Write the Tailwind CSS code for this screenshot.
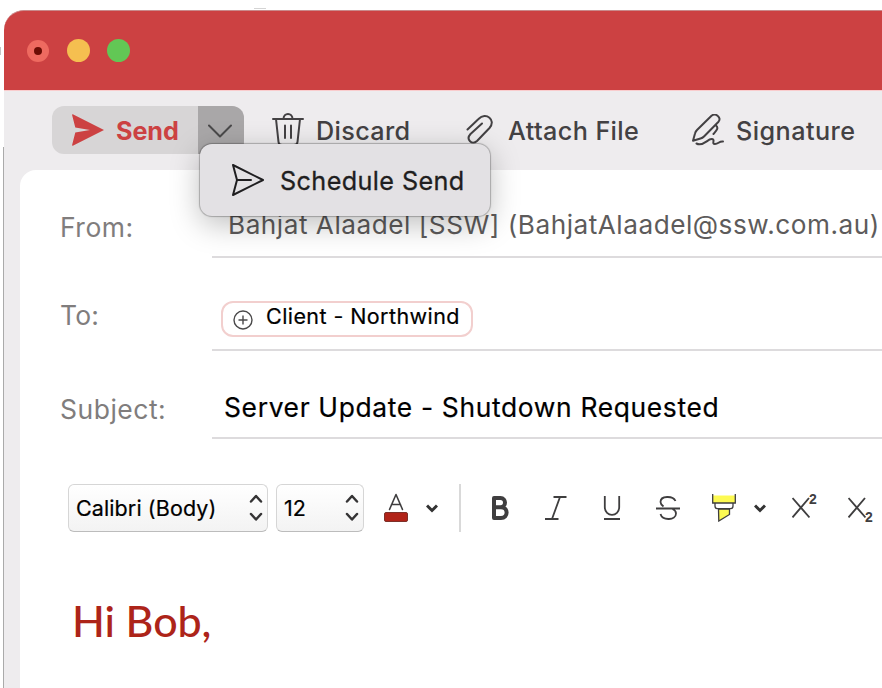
<!DOCTYPE html>
<html lang="en">
<head>
<meta charset="utf-8">
<title>Compose message</title>
<script src="https://cdn.jsdelivr.net/npm/@tailwindcss/browser@4"></script>
</head>
<body class="relative h-[688px] w-[882px] overflow-hidden bg-white font-['Inter','Liberation_Sans',sans-serif]">
<!-- Edges of the window behind -->
<div class="absolute left-0 top-[47px] h-2 w-px bg-[#c4c4c4]"></div>
<div class="absolute left-[3px] top-[147px] h-[541px] w-px bg-[#aaaaaa]"></div>
<div class="absolute left-[254px] top-[8px] h-px w-3 bg-[#d4d4d4]"></div>

<main class="ml-1 flex h-full flex-col pt-[10px]">
  <header class="flex h-[80px] shrink-0 items-center gap-4 rounded-tl-[20px] border-t border-[#c98a8b] bg-[#cc4142] pl-[22px]">
    <span class="flex size-6 items-center justify-center"><span class="flex size-[22px] items-center justify-center rounded-full bg-[#ee6a60]"><span class="size-2 rounded-full bg-[#6b0d05]"></span></span></span>
    <span class="flex size-6 items-center justify-center"><span class="size-[23px] rounded-full bg-[#f5bf50]"></span></span>
    <span class="flex size-6 items-center justify-center"><span class="size-[23px] rounded-full bg-[#62c755]"></span></span>
  </header>

  <div class="flex grow flex-col border-t border-[#f9cccd] bg-[#eeecee]">
    <nav class="flex h-[79px] shrink-0 items-start pl-12 pt-[15px] text-[25.2px] leading-[50px] font-medium text-[#434143]">
      <div class="flex h-12 w-48 shrink-0 overflow-hidden rounded-xl bg-[#d7d5d6]">
        <div class="flex w-[146px] items-center pl-5 font-bold text-[#cc4142]">
          <svg class="h-8 w-8 shrink-0" viewBox="0 0 32 32"><path d="M.8.3 32 16 .8 31.7Q0 31.8.1 31L3.3 18.6 18 16 3.3 13.4.1 1Q0 .2.8.3Z" fill="currentColor"/></svg>
          <span class="ml-3 pt-[2px] tracking-[-0.1px]">Send</span>
        </div>
        <div class="flex w-[46px] justify-center bg-[#a9a7a8] pr-[2px] pt-[18px]">
          <svg class="h-[14px] w-6" viewBox="0 0 24 14" fill="none" stroke="#4a494a" stroke-width="2" stroke-linecap="round" stroke-linejoin="round"><path d="M1 1.500 12 12.500 23 1.500"/></svg>
        </div>
      </div>
      <div class="ml-7 flex h-12 w-[194px] shrink-0">
        <svg class="mt-[6px] h-9 w-8 shrink-0" viewBox="0 0 32 36" fill="none" stroke="currentColor" stroke-width="2" stroke-linecap="round" stroke-linejoin="round"><path d="M1 7H31M11.5 7C11.500 .2 20.500 .2 20.500 7M4 7 6.500 30Q6.800 33 10 33H22Q25.200 33 25.500 30L28 7M13 13.500V26M19 13.500V26"/></svg>
        <span class="ml-3 tracking-[0.350px]">Discard</span>
      </div>
      <div class="flex h-12 w-[226px] shrink-0">
        <svg class="mt-2 h-8 w-8 shrink-0" viewBox="0 0 32 32" fill="none" stroke="currentColor" stroke-width="2" stroke-linecap="round" stroke-linejoin="round"><path d="M1.500 15.500 12.500 5C20-2.500 30.500 6 23.500 14L11 27C6 31.500-.5 25.500 4.500 20L16 9.500"/></svg>
        <span class="ml-[10px] tracking-[0.400px]">Attach File</span>
      </div>
      <div class="flex h-12 shrink-0">
        <svg class="mt-2 h-8 w-8 shrink-0" viewBox="0 0 32 32" fill="none" stroke="currentColor" stroke-width="2" stroke-linecap="round" stroke-linejoin="round"><path d="M1 26.800 3 19.500Q3.500 17.500 5 16L19.500 1.800C23.500-1.500 30 3.500 26.500 7.700L12 22.500Q10.500 24 8.500 24.500ZM24 11.500C27 14 24.500 16.500 21.500 20M4.500 29.500C11 33 15.500 25 19.500 25 24 25 19 30 23 30 26.500 30 27 27 31 27.500"/></svg>
        <span class="ml-3 tracking-[0.450px]">Signature</span>
      </div>
    </nav>

    <section class="ml-4 flex grow flex-col rounded-tl-2xl bg-white">
      <div class="flex h-[88px] shrink-0 pl-10">
        <span class="w-[152px] shrink-0 pt-10 text-[26.500px] leading-[35px] tracking-[0.500px] text-[#807d7d]">From:</span>
        <div class="grow border-b-2 border-[#dddbdd] pl-4 pt-[38px] text-[26.200px] leading-[34px] tracking-[0.510px] whitespace-nowrap text-[#5d5b5b]">Bahjat Alaadel [SSW] (BahjatAlaadel@ssw.com.au)</div>
      </div>
      <div class="flex h-[93px] shrink-0 pl-10">
        <span class="w-[152px] shrink-0 pt-10 text-[26.500px] leading-[35px] tracking-[0.200px] text-[#807d7d]">To:</span>
        <div class="grow border-b-2 border-[#dddbdd] pl-[9px] pt-[43px]">
          <div class="flex h-9 w-[252px] items-start rounded-xl border-2 border-[#f2cfce] pl-[10px] whitespace-nowrap">
            <svg class="mt-[7px] size-5 shrink-0" viewBox="0 0 20 20" fill="none" stroke="#4a494a" stroke-width="1.400"><circle cx="10" cy="10" r="9"/><path d="M10 5.500V14.500M5.500 10H14.500"/></svg>
            <span class="ml-[13px] text-[21.500px] leading-[26px] tracking-[0.420px] text-black [-webkit-text-stroke:0.2px_black]">Client - Northwind</span>
          </div>
        </div>
      </div>
      <div class="flex h-[88px] shrink-0 pl-10">
        <span class="w-[152px] shrink-0 pt-[41px] text-[26.500px] leading-[35px] tracking-[0.500px] text-[#807d7d]">Subject:</span>
        <div class="grow border-b-2 border-[#dddbdd] pl-3 pt-[39px] text-[26.400px] leading-[35px] tracking-[0.660px] whitespace-nowrap text-black [-webkit-text-stroke:0.2px_black]">Server Update - Shutdown Requested</div>
      </div>

      <div class="mt-[45px] flex h-12 shrink-0 items-center pl-12 text-[#3f3e3f]">
        <div class="flex h-12 w-[200px] items-center justify-between rounded-md border border-[#d6d6d6] border-b-[#bcbcbc] bg-linear-to-b from-white to-[#f3f3f3] pl-[7px] pr-1 text-[21.500px] tracking-[0.100px] whitespace-nowrap text-black [-webkit-text-stroke:0.2px_black]">
          <span>Calibri (Body)</span>
          <svg class="h-[28px] w-[14px]" viewBox="0 0 14 28" fill="none" stroke="#353435" stroke-width="2.500" stroke-linecap="round" stroke-linejoin="round"><path d="M2 7.500 7 2 12 7.500M2 20 7 25.500 12 20"/></svg>
        </div>
        <div class="ml-2 flex h-12 w-[88px] items-center justify-between rounded-md border border-[#d6d6d6] border-b-[#bcbcbc] bg-linear-to-b from-white to-[#f3f3f3] pl-[7px] pr-1 text-[21.500px] tracking-[0.100px] text-black [-webkit-text-stroke:0.2px_black]">
          <span>12</span>
          <svg class="h-[28px] w-[14px]" viewBox="0 0 14 28" fill="none" stroke="#353435" stroke-width="2.500" stroke-linecap="round" stroke-linejoin="round"><path d="M2 7.500 7 2 12 7.500M2 20 7 25.500 12 20"/></svg>
        </div>
        <svg class="ml-5 h-[30px] w-6 shrink-0" viewBox="0 0 24 30" fill="none"><path d="M5.500 16.500 12 1.500 18.500 16.500M7.500 11.500H16.500" stroke="#3f3e3f" stroke-width="1.600" stroke-linecap="round" stroke-linejoin="round"/><rect x=".5" y="19.500" width="23" height="9" rx="1.500" fill="#b12318" stroke="#7d3029"/></svg>
        <svg class="ml-[18px] h-3 w-3 shrink-0" viewBox="0 0 12 12" fill="none" stroke="#333" stroke-width="3"><path d="M1 3.500 6 8.500 11 3.500"/></svg>
        <span class="ml-[21px] h-12 w-[2px] shrink-0 bg-[#d9d9d9]"></span>
        <svg class="ml-[31px] h-6 w-[17px] shrink-0" viewBox="0 0 17 24" fill="none" stroke="currentColor" stroke-width="4" stroke-linejoin="round"><path d="M2 2H8.500C14.500 2 14.500 11.200 8.500 11.200H2ZM2 11.200H9C16.500 11.200 16.500 22 9 22H2Z"/></svg>
        <svg class="ml-[35px] h-6 w-6 shrink-0" viewBox="0 0 24 24" fill="none" stroke="currentColor" stroke-width="1.800"><path d="M9.500 1H22.500M1 23H14.500M16 1 8 23"/></svg>
        <svg class="ml-[34px] h-6 w-[20px] shrink-0" viewBox="0 0 20 24" fill="none" stroke="currentColor" stroke-width="1.800"><path d="M2.800 0V11C2.800 21.500 17.200 21.500 17.200 11V0M2 23H18"/></svg>
        <svg class="ml-[34px] h-6 w-6 shrink-0" viewBox="0 0 24 24" fill="none" stroke="currentColor" stroke-width="1.800"><path d="M19.500 5C17-.5 4.500-.5 4.500 6 4.500 8 5.500 9 7.500 10.500M4.500 18C6.500 25 20 24.500 20 17.500 20 15.500 19 14 16.500 13M0 12.500H24"/></svg>
        <svg class="ml-8 h-[28px] w-6 shrink-0" viewBox="0 0 24 28" fill="none" stroke="#3f3e3f" stroke-width="1.300"><path d="M.7 1.500H23.300V9H.7Z" fill="#fdfa52" stroke="none"/><path d="M6.500 15H17.500V20.500L6.800 27Z" fill="#fdfa52"/><path d="M.7 0V9H23.300V0M3 9V12Q3 14.700 5.500 14.700H18.500Q21 14.700 21 12V9"/></svg>
        <svg class="ml-[18px] h-3 w-3 shrink-0" viewBox="0 0 12 12" fill="none" stroke="#333" stroke-width="3"><path d="M1 3.500 6 8.500 11 3.500"/></svg>
        <div class="relative ml-[26px] h-6 w-[26px] shrink-0">
          <svg class="h-6 w-[18px]" viewBox="0 0 18 24" fill="none" stroke="currentColor" stroke-width="1.900"><path d="M.5 2 17.500 21.500M17 2 .5 21.500"/></svg>
          <span class="absolute -top-[5px] left-[17px] font-['Liberation_Sans',sans-serif] text-[14px] leading-4 font-bold">2</span>
        </div>
        <div class="relative ml-[30px] h-6 w-[26px] shrink-0">
          <svg class="h-6 w-[18px]" viewBox="0 0 18 24" fill="none" stroke="currentColor" stroke-width="1.900"><path d="M.5 2 17.500 21.500M17 2 .5 21.500"/></svg>
          <span class="absolute left-[17px] top-[13px] font-['Liberation_Sans',sans-serif] text-[14px] leading-4 font-bold">2</span>
        </div>
      </div>

      <p class="mt-[61px] pl-[52px] font-['Lato','Carlito',sans-serif] text-[43px] leading-[56px] font-medium tracking-[-0.100px] text-[#ad2419]">Hi Bob,</p>
    </section>
  </div>
</main>

<div class="absolute left-[200px] top-[144px] flex h-[72px] w-[290px] items-center rounded-xl bg-[#e3e1e4] pl-8 text-[25.200px] tracking-[0.400px] whitespace-nowrap text-[#1f1e20] shadow-[0_0_1px_1px_rgba(0,0,0,0.25),0_8px_30px_rgba(0,0,0,0.26)] [-webkit-text-stroke:0.3px_#1f1e20]">
  <svg class="h-8 w-8 shrink-0" viewBox="0 0 32 32" fill="none" stroke="currentColor" stroke-width="2" stroke-linecap="round" stroke-linejoin="round"><path d="M1 1 31 16 1 31 5 16ZM5 16H19"/></svg>
  <span class="ml-4 pt-[3px]">Schedule Send</span>
</div>
</body>
</html>
